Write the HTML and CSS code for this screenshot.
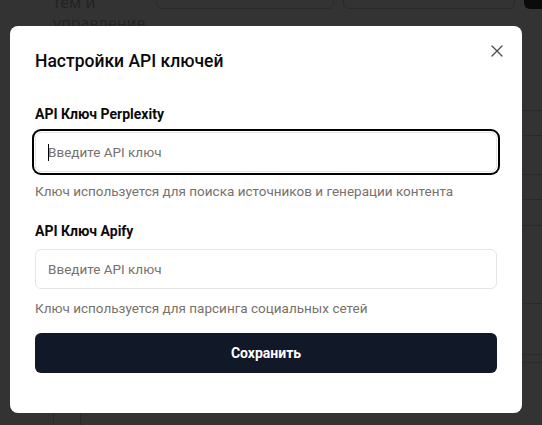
FILE: index.html
```html
<!DOCTYPE html>
<html lang="ru">
<head>
<meta charset="utf-8">
<title>Настройки API ключей</title>
<link rel="stylesheet" href="styles.css">
</head>
<body>
<div class="page">
  <div class="page-top">
    <div class="side-text">тем и управление</div>
    <div class="ghost-box box-a"></div>
    <div class="ghost-box box-b"></div>
    <div class="ghost-dark"></div>
  </div>
  <div class="page-main">
    <div class="rows">
      <div class="row"></div>
      <div class="row"></div>
      <div class="row"></div>
      <div class="row"></div>
      <div class="row"></div>
      <div class="row"></div>
      <div class="row"></div>
      <div class="row"></div>
    </div>
  </div>
  <div class="page-bottom">
    <div class="vcell"></div>
    <div class="vcell"></div>
  </div>
</div>

<div class="overlay">
  <div class="modal" role="dialog" aria-labelledby="dlg-title">
    <button class="close" type="button" aria-label="Закрыть">
      <svg width="14" height="14" viewBox="0 0 14 14" fill="none" stroke="currentColor" stroke-width="1.3" stroke-linecap="round"><path d="M2 2L12 12M12 2L2 12"/></svg>
    </button>
    <h2 class="title" id="dlg-title">Настройки API ключей</h2>
    <form class="form">
      <div class="field">
        <label class="label" for="k1">API Ключ Perplexity</label>
        <div class="input-wrap is-focused">
          <input class="input" id="k1" type="text" placeholder="Введите API ключ">
        </div>
        <p class="hint">Ключ используется для поиска источников и генерации контента</p>
      </div>
      <div class="field">
        <label class="label" for="k2">API Ключ Apify</label>
        <div class="input-wrap">
          <input class="input" id="k2" type="text" placeholder="Введите API ключ">
        </div>
        <p class="hint">Ключ используется для парсинга социальных сетей</p>
      </div>
      <button class="submit" type="button">Сохранить</button>
    </form>
  </div>
</div>
</body>
</html>
```

FILE: styles.css
```css
html, body {
  margin: 0;
  padding: 0;
}

body {
  width: 542px;
  height: 425px;
  overflow: hidden;
  background: #333333;
  font-family: Roboto, "Noto Sans", sans-serif;
  color: #0c0a09;
}

/* ---------- dimmed page underneath ---------- */
.page {
  height: 425px;
  display: flex;
  flex-direction: column;
}

.page-top {
  display: flex;
  align-items: flex-start;
  height: 9px;
  flex-shrink: 0;
}

.side-text {
  margin-left: 53px;
  margin-top: -8px;
  width: 95px;
  flex-shrink: 0;
  font-family: "Noto Sans", sans-serif;
  font-size: 16px;
  line-height: 21px;
  color: #232323;
}

.ghost-box {
  flex-shrink: 0;
  height: 40px;
  margin-top: -31px;
  border: 1px solid #2a2a2a;
  border-radius: 6px;
  box-sizing: border-box;
}

.box-a {
  margin-left: 8px;
  width: 178px;
}

.box-b {
  margin-left: 9px;
  width: 172px;
}

.ghost-dark {
  margin-left: 9px;
  flex: 1;
  height: 40px;
  margin-top: -31px;
  background: #0b0b0b;
  border-radius: 6px 0 0 6px;
}

.page-main {
  display: flex;
  flex-shrink: 0;
}

.rows {
  margin-left: 300px;
  flex: 1;
}

.row {
  box-sizing: border-box;
  border-bottom: 1px solid #2b2b2b;
}

.row:nth-child(1) { height: 102px; }
.row:nth-child(2) { height: 25px; }
.row:nth-child(3) { height: 39px; }
.row:nth-child(4) { height: 25px; }
.row:nth-child(5) { height: 26px; }
.row:nth-child(6) { height: 78px; }
.row:nth-child(7) { height: 51px; }
.row:nth-child(8) { height: 8px; }

.page-bottom {
  display: flex;
  margin-top: 32px;
  flex: 1;
}

.vcell {
  width: 26px;
  border-left: 1px solid #2a2a2a;
}

.vcell:first-child {
  margin-left: 53px;
}

/* ---------- dialog ---------- */
.overlay {
  position: fixed;
  inset: 0;
}

.modal {
  position: absolute;
  left: 10px;
  top: 26px;
  width: 512px;
  height: 387px;
  box-sizing: border-box;
  padding: 21px 25px 0;
  background: #ffffff;
  border-radius: 8px;
}

.close {
  position: absolute;
  top: 18px;
  right: 18px;
  width: 14px;
  height: 14px;
  padding: 0;
  border: 0;
  background: none;
  color: #4a4a4a;
  display: flex;
}

.title {
  margin: 0;
  font-size: 17.5px;
  line-height: 28px;
  font-weight: 500;
  color: #0a0a0a;
}

.form {
  margin-top: 29px;
  display: flex;
  flex-direction: column;
}

.field {
  display: flex;
  flex-direction: column;
  gap: 8px;
  margin-bottom: 20px;
}

.field:last-of-type {
  margin-bottom: 15px;
}

.label {
  font-size: 14px;
  line-height: 20px;
  font-weight: 700;
  color: #0c0a09;
}

.input-wrap {
  position: relative;
  border-radius: 6px;
}

.input {
  display: block;
  width: 100%;
  height: 40px;
  box-sizing: border-box;
  margin: 0;
  padding: 0 12px;
  border: 1px solid #e7e5e4;
  border-radius: 6px;
  background: #ffffff;
  font-family: inherit;
  font-size: 13.5px;
  color: #0c0a09;
  outline: none;
}

.input::placeholder {
  color: #78716c;
}

.is-focused .input {
  box-shadow: 0 0 0 1px #ffffff, 0 0 0 3px #000000;
}

.is-focused::after {
  content: "";
  position: absolute;
  left: 13px;
  top: 12px;
  width: 1px;
  height: 17px;
  background: #000000;
}

.hint {
  margin: 1px 0 0;
  font-size: 13.5px;
  line-height: 20px;
  color: #78716c;
}

.submit {
  height: 40px;
  border: 0;
  border-radius: 6px;
  background: #111827;
  color: #ffffff;
  font-family: inherit;
  font-size: 14px;
  font-weight: 700;
}
```
